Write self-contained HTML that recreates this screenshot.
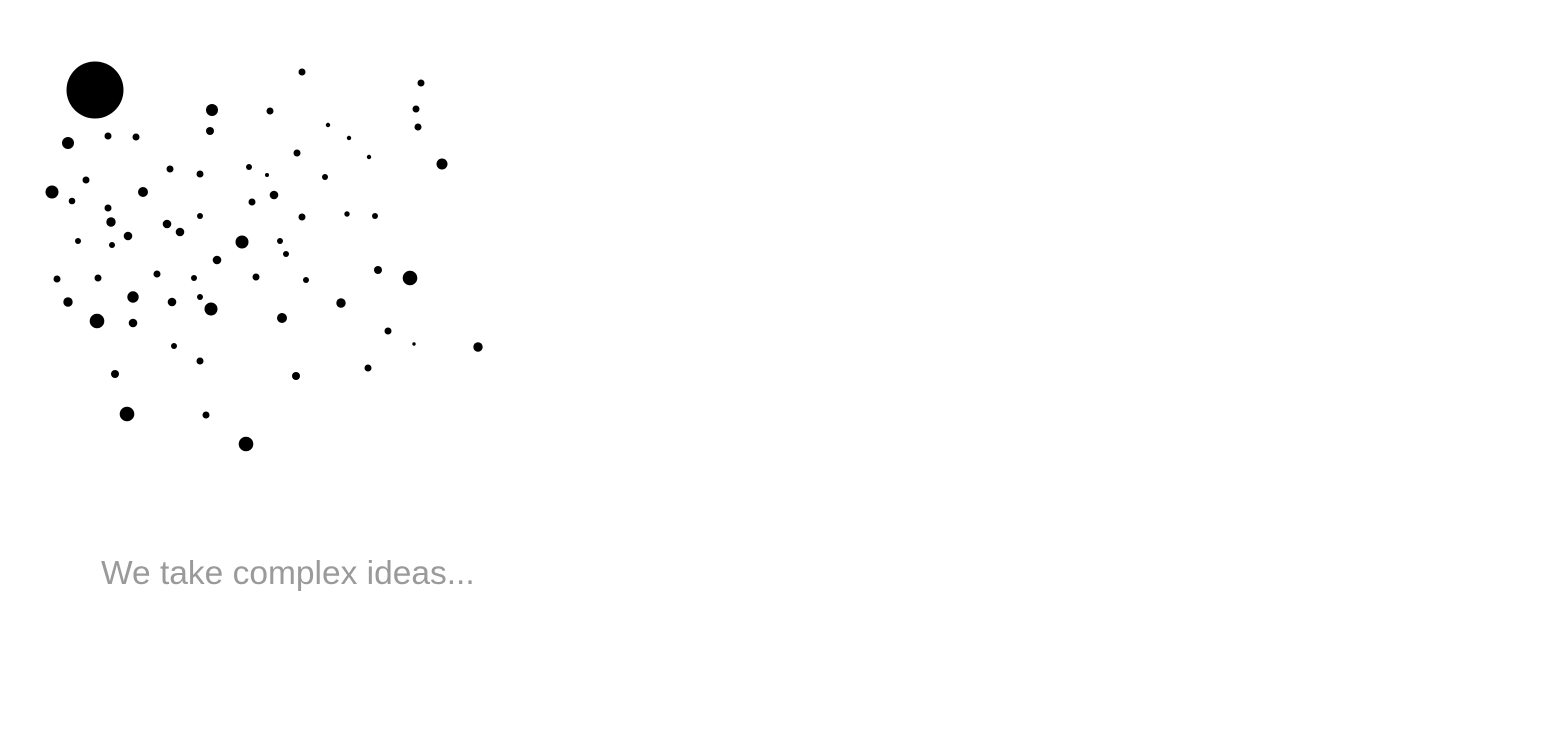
<!DOCTYPE html>
<html><head><style>
html,body{margin:0;padding:0;background:#fff;width:1541px;height:740px;overflow:hidden}
svg{position:absolute;left:0;top:0}
.t{position:absolute;left:101px;top:554px;font-family:"Liberation Sans",sans-serif;font-size:33.5px;color:#9a9a9a;white-space:nowrap;line-height:40px}
</style></head><body>
<svg width="1541" height="740" fill="#000">
<circle cx="95" cy="90" r="28.5"/>
<circle cx="302" cy="72" r="3.5"/><circle cx="421" cy="83" r="3.5"/><circle cx="212" cy="110" r="6"/>
<circle cx="270" cy="111" r="3.5"/><circle cx="416" cy="109" r="3.5"/><circle cx="328" cy="125" r="2.2"/>
<circle cx="418" cy="127" r="3.5"/><circle cx="210" cy="131" r="4"/><circle cx="68" cy="143" r="6"/>
<circle cx="108" cy="136" r="3.5"/><circle cx="136" cy="137" r="3.5"/><circle cx="349" cy="138" r="2.2"/>
<circle cx="297" cy="153" r="3.5"/><circle cx="369" cy="157" r="2.2"/><circle cx="442" cy="164" r="5.5"/>
<circle cx="170" cy="169" r="3.5"/><circle cx="200" cy="174" r="3.5"/><circle cx="249" cy="167" r="3"/>
<circle cx="267" cy="175" r="2"/><circle cx="325" cy="177" r="3"/><circle cx="86" cy="180" r="3.5"/>
<circle cx="52" cy="192" r="6.5"/><circle cx="143" cy="192" r="5"/><circle cx="72" cy="201" r="3.3"/>
<circle cx="252" cy="202" r="3.5"/><circle cx="274" cy="195" r="4.3"/><circle cx="108" cy="208" r="3.5"/>
<circle cx="111" cy="222" r="4.7"/><circle cx="200" cy="216" r="3"/><circle cx="302" cy="217" r="3.5"/>
<circle cx="347" cy="214" r="2.7"/><circle cx="375" cy="216" r="3"/><circle cx="167" cy="224" r="4.3"/>
<circle cx="180" cy="232" r="4.3"/><circle cx="128" cy="236" r="4.3"/><circle cx="78" cy="241" r="3"/>
<circle cx="112" cy="245" r="3"/><circle cx="242" cy="242" r="6.5"/><circle cx="280" cy="241" r="3"/>
<circle cx="286" cy="254" r="3"/><circle cx="217" cy="260" r="4.3"/><circle cx="378" cy="270" r="4"/>
<circle cx="410" cy="278" r="7.3"/><circle cx="57" cy="279" r="3.5"/><circle cx="98" cy="278" r="3.5"/>
<circle cx="157" cy="274" r="3.5"/><circle cx="194" cy="278" r="3"/><circle cx="256" cy="277" r="3.5"/>
<circle cx="306" cy="280" r="3"/><circle cx="68" cy="302" r="4.7"/><circle cx="133" cy="297" r="5.7"/>
<circle cx="172" cy="302" r="4.3"/><circle cx="200" cy="297" r="3"/><circle cx="211" cy="309" r="6.5"/>
<circle cx="341" cy="303" r="4.7"/><circle cx="97" cy="321" r="7.3"/><circle cx="133" cy="323" r="4.3"/>
<circle cx="282" cy="318" r="5"/><circle cx="388" cy="331" r="3.5"/><circle cx="414" cy="344" r="1.7"/>
<circle cx="478" cy="347" r="4.7"/><circle cx="174" cy="346" r="3"/><circle cx="200" cy="361" r="3.5"/>
<circle cx="115" cy="374" r="4"/><circle cx="296" cy="376" r="4"/><circle cx="368" cy="368" r="3.5"/>
<circle cx="127" cy="414" r="7.3"/><circle cx="206" cy="415" r="3.5"/><circle cx="246" cy="444" r="7.3"/>
</svg>
<div class="t">We take complex ideas...</div>
</body></html>
